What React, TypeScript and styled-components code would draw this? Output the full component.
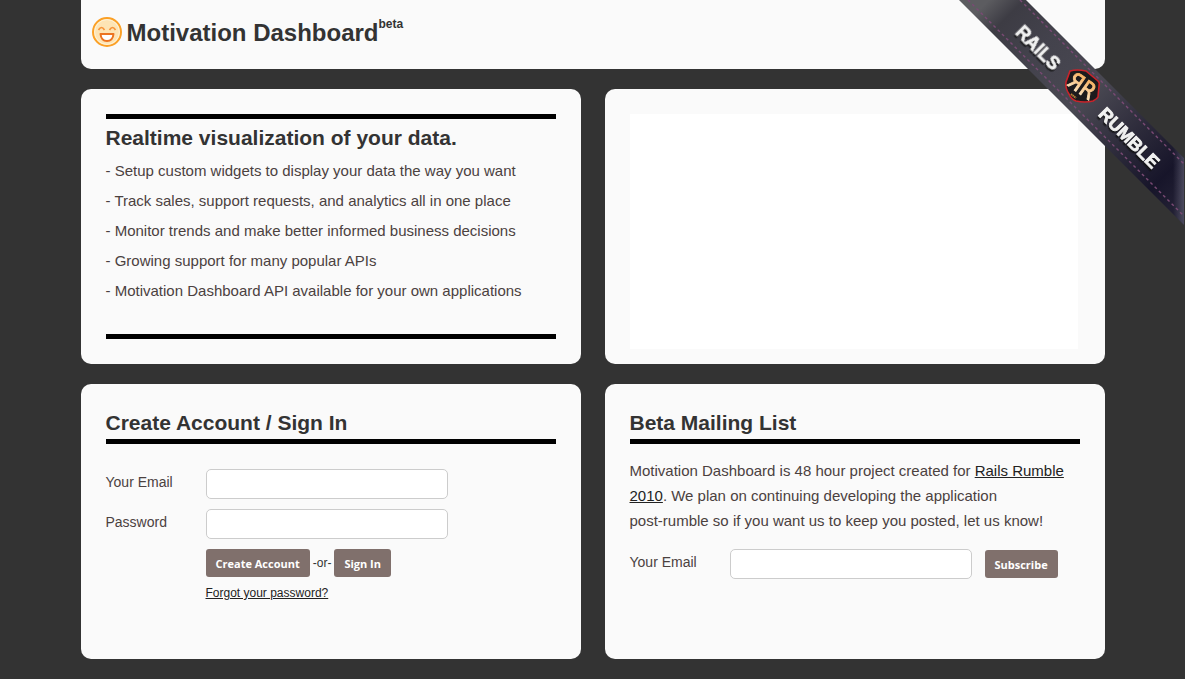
import React from "react";
import styled, { createGlobalStyle } from "styled-components";

const GlobalStyle = createGlobalStyle`
  * { box-sizing: border-box; }
  body {
    margin: 0;
    background: #333;
    color: #4b413f;
    font-family: "Liberation Sans", Arial, Helvetica, sans-serif;
    font-size: 15px;
  }
`;

const Page = styled.div`
  max-width: 1024px;
  margin: 0 auto;
  padding-bottom: 20px;
`;

const Header = styled.header`
  display: flex;
  align-items: flex-start;
  gap: 5px;
  height: 69px;
  padding: 17px 11px 0;
  background: #fafafa;
  border-radius: 0 0 10px 10px;
`;

const Title = styled.h1`
  display: flex;
  align-items: flex-start;
  margin: 0;
  color: #333;
  font-size: 24px;
  line-height: 32px;
  white-space: nowrap;
`;

const BetaTag = styled.span`
  font-size: 12px;
  line-height: 14px;
`;

const Panels = styled.main`
  display: grid;
  grid-template-columns: repeat(2, minmax(0, 1fr));
  gap: 20px 24px;
  margin-top: 20px;
`;

const Panel = styled.section`
  min-height: 275px;
  padding: 25px 25px 15px;
  background: #fafafa;
  border-radius: 10px;
`;

const Framed = styled.div`
  padding: 4px 0 28px;
  border-top: 5px solid #000;
  border-bottom: 5px solid #000;
`;

const Heading = styled.h2<{ $ruled?: boolean }>`
  margin: 0;
  padding-bottom: ${(p) => (p.$ruled ? "2px" : "3px")};
  border-bottom: ${(p) => (p.$ruled ? "5px solid #000" : "0")};
  color: #333;
  font-size: 21px;
  line-height: ${(p) => (p.$ruled ? "28px" : "30px")};
`;

const Features = styled.ul`
  margin: 0;
  padding: 0;
  list-style: none;
  line-height: 30px;
`;

const Screen = styled.div`
  height: 235px;
  margin-right: 2px;
  background: #fff;
`;

const Blurb = styled.p`
  margin: 14px 0 16px;
  line-height: 25px;
`;

const Unbroken = styled.span`
  white-space: nowrap;
`;

const Form = styled.form`
  display: flex;
  flex-direction: column;
  gap: 10px;
`;

const AccountForm = styled(Form)`
  margin-top: 25px;
`;

const Row = styled.div`
  display: flex;
  align-items: center;
`;

const Label = styled.label`
  flex: 0 0 100px;
  padding-bottom: 4px;
  font-size: 14px;
`;

const TextInput = styled.input`
  width: 242px;
  min-width: 0;
  height: 30px;
  padding: 4px 8px;
  border: 1px solid #ccc;
  border-radius: 5px;
  background: #fff;
  font: inherit;
`;

const Actions = styled.div`
  display: flex;
  align-items: center;
  gap: 3px;
  padding-left: 100px;
  color: #333;
  font-size: 12px;
`;

const Button = styled.button`
  height: 28px;
  padding: 0 10px;
  border: 0;
  border-radius: 3px;
  background: #80706c;
  color: #fff;
  font-family: "Open Sans", "Noto Sans", sans-serif;
  font-size: 11px;
  font-weight: 700;
  white-space: nowrap;
  cursor: pointer;
`;

const SubscribeButton = styled(Button)`
  margin-left: 13px;
`;

const Link = styled.a`
  color: #222;
`;

const SmallLink = styled(Link)`
  align-self: flex-start;
  margin-left: 100px;
  font-size: 12px;
  line-height: 12px;
`;

const RibbonLink = styled.a`
  position: absolute;
  top: 0;
  right: 0;
  width: 226px;
  height: 226px;
  pointer-events: none;

  svg { display: block; }
`;

const features = [
  "Setup custom widgets to display your data the way you want",
  "Track sales, support requests, and analytics all in one place",
  "Monitor trends and make better informed business decisions",
  "Growing support for many popular APIs",
  "Motivation Dashboard API available for your own applications",
];

function Smiley() {
  return (
    <svg width="30" height="30" viewBox="0 0 30 30" aria-hidden="true">
      <circle cx="15" cy="15" r="14" fill="#fde4b4" stroke="#fba026" strokeWidth="2" />
      <circle cx="15" cy="15" r="12.4" fill="none" stroke="#fff3d8" strokeWidth="1" />
      <path d="M6.5 13Q9.5 8 12.5 13M17.5 13Q20.5 8 23.5 13" fill="none" stroke="#f7943a" strokeWidth="1.7" />
      <path d="M8.500 17H21.500Q20.800 24 15 24Q9.200 24 8.500 17Z" fill="#fff" stroke="#ec7420" strokeWidth="2" strokeLinejoin="round" />
    </svg>
  );
}

function Ribbon() {
  return (
    <RibbonLink href="#rails-rumble" aria-label="Rails Rumble">
      <svg width="226" height="226" viewBox="0 0 226 226">
        <defs>
          <linearGradient id="band" gradientUnits="userSpaceOnUse" x1="30" y1="0" x2="225" y2="195">
            <stop offset="0" stopColor="#5c5c60" />
            <stop offset="0.09" stopColor="#3d3c44" />
            <stop offset="0.25" stopColor="#43424c" />
            <stop offset="0.5" stopColor="#494852" />
            <stop offset="0.72" stopColor="#2c2a3a" />
            <stop offset="0.9" stopColor="#17152a" />
            <stop offset="1" stopColor="#211f33" />
          </linearGradient>
          <linearGradient id="fold" gradientUnits="userSpaceOnUse" x1="214" y1="0" x2="225" y2="0">
            <stop offset="0" stopColor="#77758a" stopOpacity="0" />
            <stop offset="1" stopColor="#77758a" stopOpacity="0.5" />
          </linearGradient>
          <linearGradient id="gold" x1="0" y1="0" x2="0" y2="1">
            <stop offset="0" stopColor="#f7a750" />
            <stop offset="1" stopColor="#fff0d2" />
          </linearGradient>
        </defs>
        <path d="M0 0H67L225 158V225Z" fill="url(#band)" />
        <path d="M205 138L225 158V225L205 205Z" fill="url(#fold)" />
        <path d="M9 0L225 216M61 0L225 164" stroke="#7a4a74" strokeWidth="1.4" strokeDasharray="3 3" />
        <g fontFamily='"Liberation Sans", Arial, sans-serif' fontWeight="700" fontSize="18" textAnchor="middle">
          <g fill="#111" opacity="0.75" stroke="#111" strokeWidth="0.8">
            <text transform="translate(78 50) rotate(45)" y="6">RAILS</text>
            <text transform="translate(169 140) rotate(45)" y="6">RUMBLE</text>
          </g>
          <g fill="#f1f1f1" stroke="#f1f1f1" strokeWidth="0.8">
            <text transform="translate(79 48) rotate(45)" y="6">RAILS</text>
            <text transform="translate(170 138) rotate(45)" y="6">RUMBLE</text>
          </g>
        </g>
        <path d="M111 71Q118 69 127 71L139 81Q141 83 140 86L139 97Q138 99 134 101Q126 103 117 101Q112 99 110 94Q106 88 107 82Z" fill="#1d1b1d" stroke="#c9232a" strokeWidth="1.6" />
        <g transform="translate(123 86) rotate(35)" fontFamily='"DejaVu Sans Condensed", "DejaVu Sans", sans-serif' textAnchor="middle">
          <text fontSize="23" y="8" fill="url(#gold)" stroke="url(#gold)" strokeWidth="0.8">ЯR</text>
        </g>
        <path d="M112 94L117 98" stroke="#b98439" strokeWidth="2" strokeDasharray="1.500 0.500" />
      </svg>
    </RibbonLink>
  );
}

export default function App() {
  return (
    <>
      <GlobalStyle />
      <Page>
        <Header>
          <Smiley />
          <Title>
            Motivation Dashboard<BetaTag>beta</BetaTag>
          </Title>
        </Header>
        <Panels>
          <Panel>
            <Framed>
              <Heading>Realtime visualization of your data.</Heading>
              <Features>
                {features.map((feature) => (
                  <li key={feature}>- {feature}</li>
                ))}
              </Features>
            </Framed>
          </Panel>
          <Panel>
            <Screen />
          </Panel>
          <Panel>
            <Heading $ruled>Create Account / Sign In</Heading>
            <AccountForm onSubmit={(e) => e.preventDefault()}>
              <Row>
                <Label htmlFor="account-email">Your Email</Label>
                <TextInput id="account-email" type="email" />
              </Row>
              <Row>
                <Label htmlFor="account-password">Password</Label>
                <TextInput id="account-password" type="password" />
              </Row>
              <Actions>
                <Button type="submit">Create Account</Button>
                <span>-or-</span>
                <Button type="button">Sign In</Button>
              </Actions>
              <SmallLink href="#forgot">Forgot your password?</SmallLink>
            </AccountForm>
          </Panel>
          <Panel>
            <Heading $ruled>Beta Mailing List</Heading>
            <Blurb>
              Motivation Dashboard is 48 hour project created for{" "}
              <Link href="#rumble-2010">Rails Rumble 2010</Link>. We plan on continuing developing the application{" "}
              <Unbroken>post-rumble</Unbroken> so if you want us to keep you posted, let us know!
            </Blurb>
            <Form onSubmit={(e) => e.preventDefault()}>
              <Row>
                <Label htmlFor="list-email">Your Email</Label>
                <TextInput id="list-email" type="email" />
                <SubscribeButton type="submit">Subscribe</SubscribeButton>
              </Row>
            </Form>
          </Panel>
        </Panels>
      </Page>
      <Ribbon />
    </>
  );
}
